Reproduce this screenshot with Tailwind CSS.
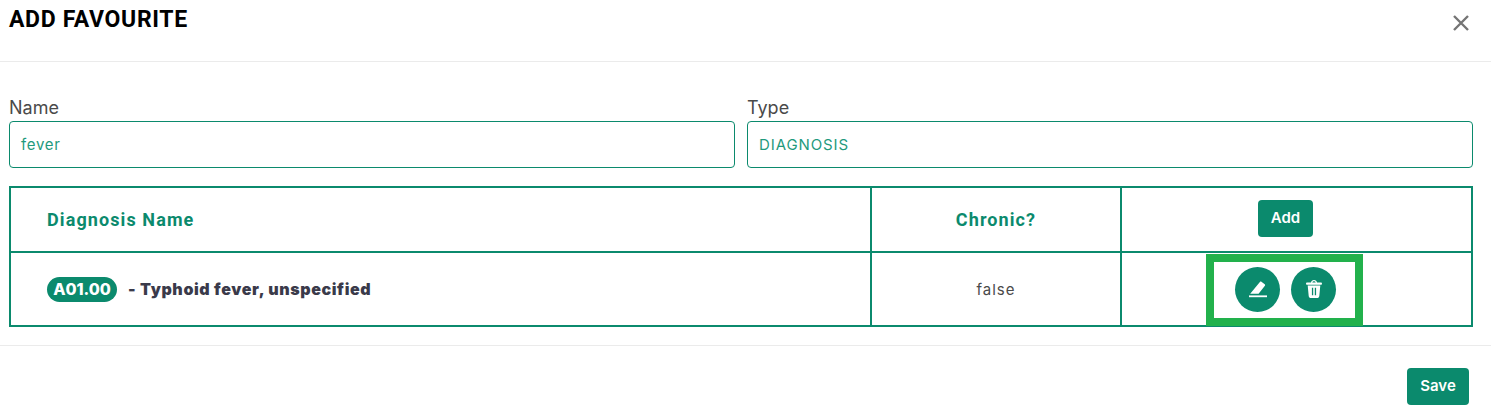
<!DOCTYPE html>
<html lang="en">
  <head>
    <meta charset="UTF-8" />
    <meta name="viewport" content="width=device-width, initial-scale=1.0" />
    <title>Add Favourite</title>
    <script src="https://cdn.jsdelivr.net/npm/@tailwindcss/browser@4"></script>
  </head>
  <body class="bg-white font-['Inter',sans-serif] overflow-hidden">
    <div class="w-[1491px] h-[420px]">
      <!-- Header -->
      <div class="h-[62px] border-b border-[#ebebeb] flex justify-between items-start pl-[9px] pr-[20px]">
        <h2 class="mt-[6px] text-[23px] leading-[28px] font-bold text-black font-['Roboto',sans-serif] tracking-[0.65px]">ADD FAVOURITE</h2>
        <button class="mt-[13px] text-[#757575]">
          <svg class="w-5 h-5" viewBox="0 0 20 20" fill="none" stroke="currentColor" stroke-width="2.4"><path d="M3 3l14 14M17 3L3 17" /></svg>
        </button>
      </div>

      <!-- Fields -->
      <div class="pl-[9px] pr-[18px] pt-[33px] grid grid-cols-2 gap-x-[12px]">
        <div>
          <label class="block text-[18px] leading-[26px] text-[#4a4a4a]">Name</label>
          <div class="h-[47px] border border-[#0b8a6d] rounded-[4px] px-[11px] pt-[2px] flex items-center text-[15px] text-[#1f9a7d] tracking-[0.7px]">fever</div>
        </div>
        <div>
          <label class="block text-[18px] leading-[26px] text-[#4a4a4a]">Type</label>
          <div class="h-[47px] border border-[#0b8a6d] rounded-[4px] px-[11px] pt-[2px] flex items-center text-[15px] text-[#1f9a7d] tracking-[0.9px]">DIAGNOSIS</div>
        </div>
      </div>

      <!-- Table -->
      <div class="ml-[9px] mr-[18px] mt-[18px] w-[1464px] border-2 border-[#0b8a6d] text-[#0b8a6d]">
        <div class="flex h-[65px] border-b-2 border-[#0b8a6d]">
          <div class="w-[859px] pl-[36px] flex items-center font-['Roboto',sans-serif] font-bold text-[18px] tracking-[1.1px]">Diagnosis Name</div>
          <div class="w-[250px] border-l-2 border-[#0b8a6d] flex items-center justify-center font-['Roboto',sans-serif] font-bold text-[18px] tracking-[1.1px]">Chronic?</div>
          <div class="flex-1 border-l-2 border-[#0b8a6d] flex items-center justify-center pr-[22px] pb-[2px]">
            <button class="w-[55px] h-[37px] bg-[#0b8a6d] text-white rounded-[4px] text-[15px] font-semibold">Add</button>
          </div>
        </div>
        <div class="flex h-[72px]">
          <div class="w-[859px] pl-[36px] flex items-center">
            <span class="h-[25px] w-[70px] rounded-full bg-[#0b8a6d] text-white text-[16px] font-extrabold flex items-center justify-center">A01.00</span>
            <span class="ml-[11px] text-[16px] leading-[24px] font-black text-[#3a3a4a] tracking-[0.62px]">- Typhoid fever, unspecified</span>
          </div>
          <div class="w-[250px] border-l-2 border-[#0b8a6d] flex items-center justify-center pt-[2px] text-[15px] text-[#4a4a4a] tracking-[1px]">false</div>
          <div class="flex-1 border-l-2 border-[#0b8a6d] relative flex items-center justify-center gap-[11px] pr-[22px]">
            <button class="w-[45px] h-[45px] rounded-full bg-[#0b8a6d] flex items-center justify-center">
              <svg class="w-[20px] h-[20px]" viewBox="0 0 20 20" fill="white"><path d="M2.200 14.800 11.900 2.900c.4-.5 1-.6 1.500-.2l3.300 2.600c.5.400.6 1 .2 1.500L10.600 14.800z" /><rect x="1" y="16.400" width="18" height="1.800" /></svg>
            </button>
            <button class="w-[45px] h-[45px] rounded-full bg-[#0b8a6d] flex items-center justify-center">
              <svg class="w-[18px] h-[18px]" viewBox="0 0 18 18" fill="white"><path fill-rule="evenodd" d="M6 2.600C6.200 1 7.400 0 9 0s2.800 1 3 2.600h3.800c.7 0 1.200.5 1.200 1.100s-.5 1.100-1.200 1.100H2.200C1.500 4.800 1 4.300 1 3.700s.5-1.100 1.200-1.100zM7.300 2.600h3.400C10.500 1.700 9.800 1.200 9 1.200s-1.500.5-1.700 1.400z" /><path fill-rule="evenodd" d="M2.700 5.600h12.600l-1 10.300c-.1 1.200-1 2.100-2.200 2.100H5.900c-1.200 0-2.100-.9-2.200-2.100zM6.900 7.800v7.400h1.300V7.800zm2.900 0v7.400h1.300V7.800z" /></svg>
            </button>
            <!-- green highlight drawn over the action buttons -->
            <div class="absolute left-[84px] top-[1px] w-[157px] h-[72px] border-[8px] border-[#22b14c]"></div>
          </div>
        </div>
      </div>

      <!-- Footer -->
      <div class="mt-[18px] h-[75px] border-t border-[#ebebeb] flex justify-end items-start pt-[22px] pr-[22px]">
        <button class="w-[62px] h-[37px] bg-[#0b8a6d] text-white rounded-[4px] text-[15px] font-semibold">Save</button>
      </div>
    </div>
  </body>
</html>
